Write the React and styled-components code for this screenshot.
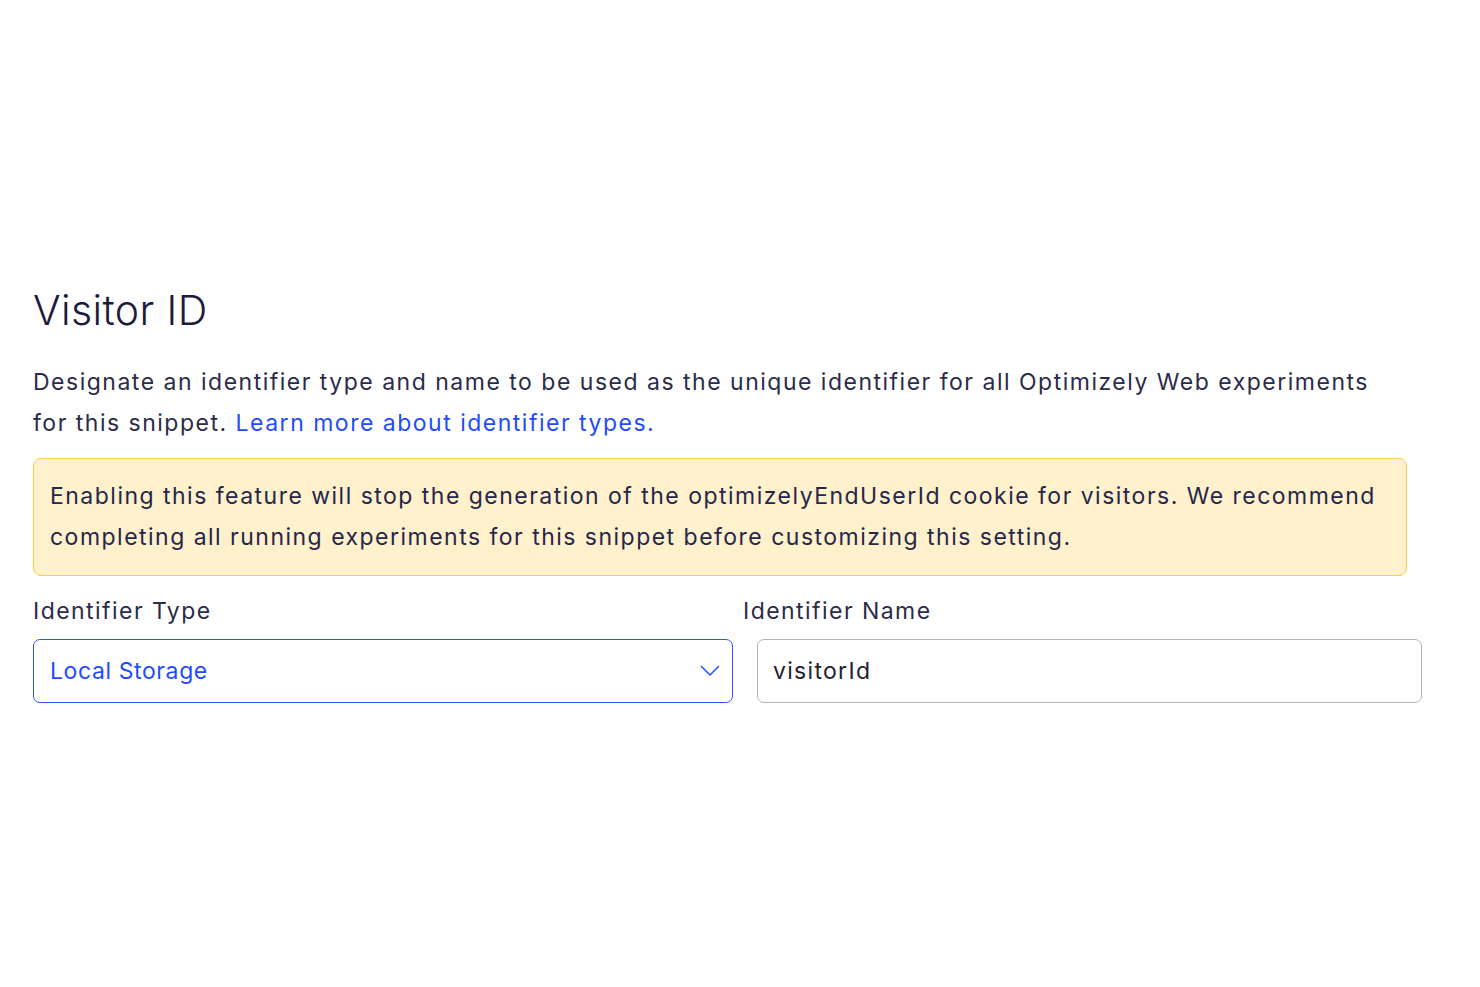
import React from 'react'
import styled, { createGlobalStyle } from 'styled-components'

const GlobalStyle = createGlobalStyle`
  body {
    margin: 0;
    background: #ffffff;
    font-family: Inter, "Noto Sans", sans-serif;
    color: #1e1e3c;
  }
`

const Page = styled.div`
  padding: 283px 58px 0 33px;
`

const Title = styled.h1`
  margin: 0;
  font-size: 41px;
  font-weight: 300;
  line-height: 54px;
  color: #1b1b3d;
  letter-spacing: 0.4px;
`

const Intro = styled.p`
  margin: 25px 0 0;
  width: 1390px;
  font-size: 23px;
  line-height: 41px;
  letter-spacing: 1.5px;
  color: #2b2b4a;

  a {
    color: #1f4bff;
    text-decoration: none;
  }
`

const Warning = styled.div`
  margin-top: 14px;
  width: 1374px;
  box-sizing: border-box;
  padding: 17px 16px;
  background: #fff1cc;
  border: 1px solid #f9cd45;
  border-radius: 8px;
  font-size: 23px;
  line-height: 41px;
  letter-spacing: 1.48px;
  color: #26264a;
`

const Fields = styled.div`
  display: grid;
  grid-template-columns: 700px 679px;
  column-gap: 10px;
  margin-top: 19px;
`

const Field = styled.div`
  display: flex;
  flex-direction: column;
`

const Label = styled.label`
  font-size: 23px;
  line-height: 32px;
  letter-spacing: 1.45px;
  color: #2b2b4a;
  margin-bottom: 12px;
`

const Control = styled.div`
  box-sizing: border-box;
  height: 64px;
  display: flex;
  align-items: center;
  justify-content: space-between;
  padding: 0 12px 0 ${p => (p.$inset ? '15px' : '16px')};
  margin-left: ${p => (p.$inset ? '14px' : '0')};
  border: 1px solid ${p => (p.$active ? '#2a55ff' : '#b3b3b8')};
  border-radius: 7px;
  font-size: 23px;
  letter-spacing: ${p => (p.$inset ? '1.3px' : '0.6px')};
  color: ${p => (p.$active ? '#1f4bff' : '#222233')};
`

const Chevron = () => (
  <svg width="20" height="12" viewBox="0 0 20 12" fill="none">
    <path d="M1.5 1.5 L10 10 L18.5 1.5" stroke="#2a55ff" strokeWidth="1.6" strokeLinecap="round" strokeLinejoin="round" />
  </svg>
)

export default function App() {
  return (
    <Page>
      <GlobalStyle />
      <Title>Visitor ID</Title>
      <Intro>
        Designate an identifier type and name to be used as the unique identifier for all Optimizely Web experiments
        <br />
        for this snippet. <a href="#">Learn more about identifier types.</a>
      </Intro>
      <Warning>
        Enabling this feature will stop the generation of the optimizelyEndUserId cookie for visitors. We recommend
        completing all running experiments for this snippet before customizing this setting.
      </Warning>
      <Fields>
        <Field>
          <Label>Identifier Type</Label>
          <Control $active>
            <span>Local Storage</span>
            <Chevron />
          </Control>
        </Field>
        <Field>
          <Label>Identifier Name</Label>
          <Control $inset>
            <span>visitorId</span>
          </Control>
        </Field>
      </Fields>
    </Page>
  )
}
